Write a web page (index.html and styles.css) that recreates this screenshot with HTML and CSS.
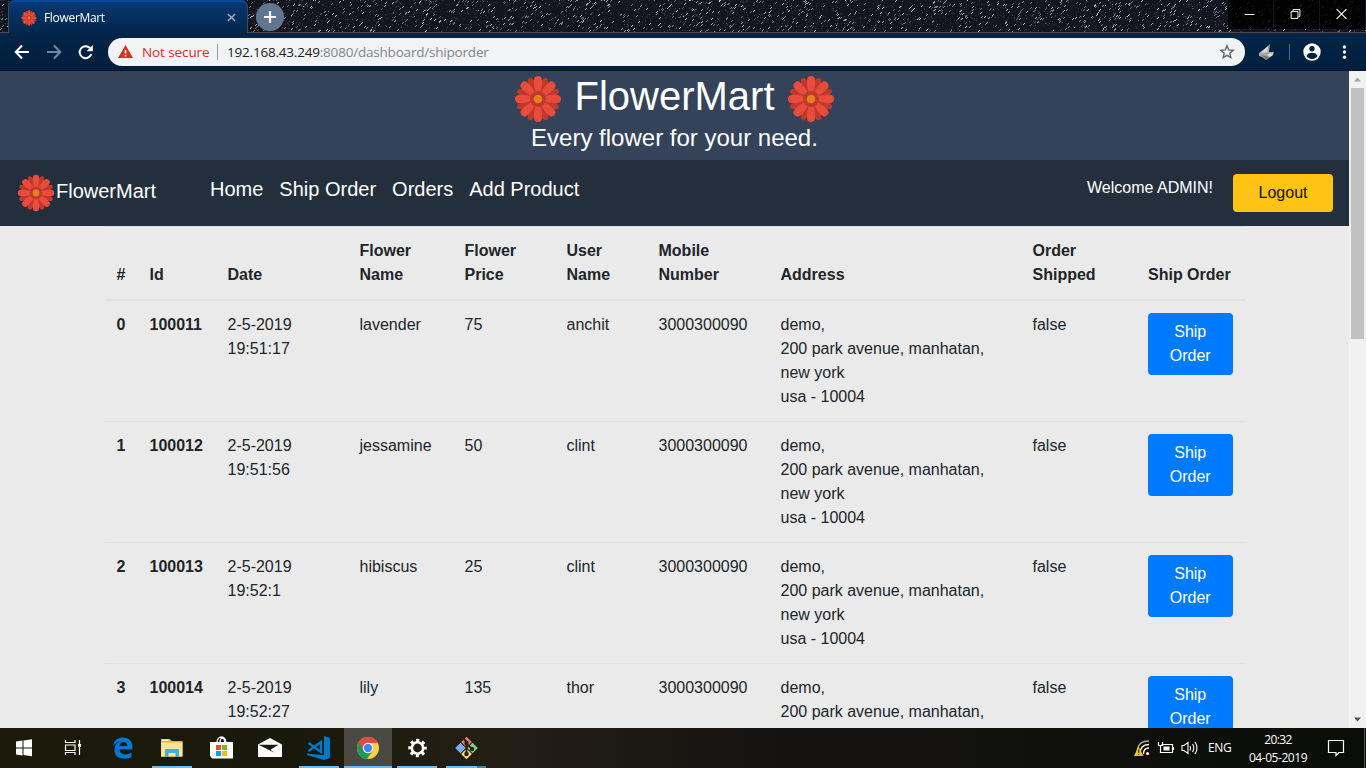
FILE: index.html
```html
<!DOCTYPE html>
<html lang="en">
<head>
<meta charset="utf-8">
<title>FlowerMart</title>
<link rel="stylesheet" href="styles.css">
</head>
<body>
<svg width="0" height="0" class="defs">
  <symbol id="flower" viewBox="0 0 48 48">
    <g fill="#c0392b">
      <g id="dark"><ellipse cx="24" cy="10.5" rx="4" ry="9.3" transform="rotate(22.5 24 24)"/><ellipse cx="24" cy="10.5" rx="4" ry="9.3" transform="rotate(67.5 24 24)"/><ellipse cx="24" cy="10.5" rx="4" ry="9.3" transform="rotate(112.5 24 24)"/><ellipse cx="24" cy="10.5" rx="4" ry="9.3" transform="rotate(157.5 24 24)"/></g>
      <use href="#dark" transform="rotate(180 24 24)"/>
      <circle cx="24" cy="24" r="13"/>
    </g>
    <g fill="#e74c3c">
      <g id="light"><path id="petal" d="M22 19C20.5 13 19.5 9 20 5a4 4 0 0 1 8 0C28.500 9 27.500 13 26 19z"/><use href="#petal" transform="rotate(45 24 24)"/><use href="#petal" transform="rotate(90 24 24)"/><use href="#petal" transform="rotate(135 24 24)"/></g>
      <use href="#light" transform="rotate(180 24 24)"/>
    </g>
    <circle cx="24" cy="24" r="8" fill="#c0392b"/><circle cx="24" cy="24" r="4.300" fill="#e67e22"/>
  </symbol>
</svg>
<div class="screen">
  <header class="titlebar">
    <canvas class="stars" id="stars" width="1366" height="33"></canvas>
    <div class="tab">
      <svg class="tab-icon"><use href="#flower"/></svg>
      <span class="tab-title">FlowerMart</span>
      <svg class="tab-close" viewBox="0 0 10 10"><path d="M1 1l8 8M9 1l-8 8" stroke="#a6b1c2" stroke-width="1.500"/></svg>
    </div>
    <div class="new-tab"><svg viewBox="0 0 28 28"><path d="M14 8v12M8 14h12" stroke="#fff" stroke-width="2.200"/></svg></div>
    <div class="window-controls">
      <svg viewBox="0 0 46 29"><path d="M17 14.500h10" stroke="#fff"/></svg>
      <svg viewBox="0 0 46 29"><path d="M17.500 11.500h7v7h-7zM19.500 11V9.500h7v7H25" fill="none" stroke="#fff"/></svg>
      <svg viewBox="0 0 46 29"><path d="M17 9l10 10M27 9L17 19" stroke="#fff" stroke-width="1.100"/></svg>
    </div>
  </header>
  <div class="toolbar">
    <svg class="nav-icons" viewBox="0 0 108 38" fill="none" stroke-width="2">
      <path d="M29 19H16M22 12.500L15.700 19l6.300 6.500" stroke="#fff"/>
      <path d="M47 19h13M54 12.500l6.300 6.500-6.300 6.500" stroke="#7487a0"/>
      <path d="M91.300 21.200a6 6 0 1 1-1.300-6.200" stroke="#fff"/><path d="M92.800 12v6.200h-6.200z" fill="#fff"/>
    </svg>
    <div class="omnibox">
      <svg class="warn" viewBox="0 0 15 13"><path d="M7.500 0L15 13H0z" fill="#d93025"/><path d="M7.500 5v3.500M7.500 9.800v1.600" stroke="#fff" stroke-width="1.600"/></svg>
      <span class="not-secure">Not secure</span>
      <i class="divider"></i>
      <span class="url"><b>192.168.43.249</b>:8080/dashboard/shiporder</span>
      <svg class="star" viewBox="0 0 16 16"><path d="M8 1.800l1.700 4.100 4.500.4-3.400 2.900 1 4.400L8 11.300l-3.800 2.300 1-4.400L1.800 6.300l4.500-.4z" fill="none" stroke="#5f6368" stroke-width="1.400"/></svg>
    </div>
    <svg class="tools" viewBox="0 0 121 38">
      <path d="M14 20l9-7 2-2-1 8 5 0-1 3-4 3-3 2-4-3-3-1z" fill="#a9a9a7"/><path d="M16 20l7-7-1 6zM23 21l5-1-1 3-4 1z" fill="#dededc"/><path d="M16 22l5 1 4 1-4 3z" fill="#77797a"/>
      <path d="M44.500 11v16" stroke="#526984"/>
      <circle cx="67" cy="19" r="8.700" fill="#fff"/><circle cx="67" cy="15.800" r="2.700" fill="#02203f"/><path d="M61.500 23c1-4.500 10-4.500 11 0-2 4-9 4-11 0z" fill="#02203f"/>
      <g fill="#fff"><circle cx="99.500" cy="14" r="1.700"/><circle cx="99.500" cy="19" r="1.700"/><circle cx="99.500" cy="24.200" r="1.700"/></g>
    </svg>
  </div>
  <div class="viewport">
    <main class="page">
      <section class="hero">
        <div class="hero-title"><svg><use href="#flower"/></svg><h1>FlowerMart</h1><svg><use href="#flower"/></svg></div>
        <h4>Every flower for your need.</h4>
      </section>
      <nav class="navbar">
        <div class="brand"><svg><use href="#flower"/></svg><span>FlowerMart</span></div>
        <div class="links"><a>Home</a><a>Ship Order</a><a>Orders</a><a>Add Product</a></div>
        <span class="welcome">Welcome ADMIN!</span>
        <button class="logout">Logout</button>
      </nav>
      <table class="orders">
        <colgroup><col class="c-num"><col class="c-id"><col class="c-date"><col class="c-flower"><col class="c-price"><col class="c-user"><col class="c-mobile"><col class="c-address"><col class="c-shipped"><col class="c-ship"></colgroup>
        <thead><tr><th>#</th><th>Id</th><th>Date</th><th>Flower<br>Name</th><th>Flower<br>Price</th><th>User<br>Name</th><th>Mobile<br>Number</th><th>Address</th><th>Order<br>Shipped</th><th>Ship Order</th></tr></thead>
        <tbody>
          <tr><th>0</th><th>100011</th><td>2-5-2019<br>19:51:17</td><td>lavender</td><td>75</td><td>anchit</td><td>3000300090</td><td>demo,<br>200 park avenue, manhatan,<br>new york<br>usa - 10004</td><td>false</td><td><button class="ship">Ship<br>Order</button></td></tr>
          <tr><th>1</th><th>100012</th><td>2-5-2019<br>19:51:56</td><td>jessamine</td><td>50</td><td>clint</td><td>3000300090</td><td>demo,<br>200 park avenue, manhatan,<br>new york<br>usa - 10004</td><td>false</td><td><button class="ship">Ship<br>Order</button></td></tr>
          <tr><th>2</th><th>100013</th><td>2-5-2019<br>19:52:1</td><td>hibiscus</td><td>25</td><td>clint</td><td>3000300090</td><td>demo,<br>200 park avenue, manhatan,<br>new york<br>usa - 10004</td><td>false</td><td><button class="ship">Ship<br>Order</button></td></tr>
          <tr><th>3</th><th>100014</th><td>2-5-2019<br>19:52:27</td><td>lily</td><td>135</td><td>thor</td><td>3000300090</td><td>demo,<br>200 park avenue, manhatan,</td><td>false</td><td><button class="ship">Ship<br>Order</button></td></tr>
        </tbody>
      </table>
    </main>
    <div class="scrollbar">
      <svg viewBox="0 0 17 17"><path d="M5 10.500h7L8.500 6.500z" fill="#a3a3a3"/></svg>
      <div class="thumb"></div>
      <svg class="down" viewBox="0 0 17 17"><path d="M5 6.500h7l-3.500 4z" fill="#505050"/></svg>
    </div>
  </div>
  <footer class="taskbar">
    <div class="app"><svg viewBox="0 0 48 40"><path d="M16 13.500l6.500-1v7H16zM23.500 12.400l8.500-1.200v8.300h-8.500zM16 20.500h6.500v7l-6.500-1zM23.500 20.500H32v7.700l-8.500-1.100z" fill="#fff"/></svg></div>
    <div class="app"><svg viewBox="0 0 48 40"><path d="M16.500 12v2.500h9.500V12M16.500 27v-2.500h9.500V27M16.500 17h9.500v5.500h-9.500zM30.500 12v15" fill="none" stroke="#fff" stroke-width="1.200"/><path d="M29 16h3v3h-3z" fill="#fff"/></svg></div>
    <div class="app gap-edge"><svg viewBox="0 0 48 40"><path d="M14 18.500C15 12 19 9.500 24 9.500c6.500 0 9.500 4.500 9.500 9.500v2.500H20.500c.3 6 7.500 6 12 3v4.500c-7 3.500-17 2-17-7 0-5 3-8 6-9-3 .5-5.500 2-7.500 5.500zM20.500 18h7.800c0-5.500-7.300-5-7.800 0z" fill="#0078d7"/></svg></div>
    <div class="app open"><svg viewBox="0 0 48 40"><path d="M13 11h9l1.500 2H34.500v16H13z" fill="#e8b334"/><path d="M14 11.500h7l-1 1.500h-6z" fill="#fff3cb"/><path d="M13 14.500h21.500v13.500H13z" fill="#ffe591"/><path d="M17 21h14v8h-3.500v-4h-7v4H17z" fill="#3bb0e5"/></svg></div>
    <div class="app"><svg viewBox="0 0 48 40"><path d="M20 15c0-8 9-8 9 0M23 15c0-6 4-7 5 0" fill="none" stroke="#fff" stroke-width="1.300"/><path d="M13 14h23v16.500H15L13 28z" fill="#fff"/><path d="M19 17h5v5h-5z" fill="#f25022"/><path d="M25 17h5v5h-5z" fill="#7fba00"/><path d="M19 23h5v5h-5z" fill="#00a4ef"/><path d="M25 23h5v5h-5z" fill="#ffb900"/></svg></div>
    <div class="app"><svg viewBox="0 0 48 40"><path d="M12 16.500L24 10l12 6.500V29H12z" fill="#fff"/><path d="M12.500 16.800h20l-8 5 4 3z" fill="#181a0b"/></svg></div>
    <div class="app open"><svg viewBox="0 0 48 40"><path d="M29 8l6 2v20l-6 2-17-5v-1.500l17 1.800z" fill="#0078c8"/><path d="M13.500 15l12.500 9V14l-12.500 9" fill="none" stroke="#0078c8" stroke-width="2.400"/></svg></div>
    <div class="app active open"><svg viewBox="0 0 48 40"><circle cx="24" cy="20" r="11" fill="#ffce44"/><path d="M24 20L14.500 14.500A11 11 0 0 0 23 31l5.500-8z" fill="#1a9d58"/><path d="M24 20v-5h10A11 11 0 0 0 14.500 14.500l4.800 8.200z" fill="#dc4c3f"/><circle cx="24" cy="20" r="5.200" fill="#fff"/><circle cx="24" cy="20" r="4.200" fill="#4285f4"/></svg></div>
    <div class="app open"><svg viewBox="0 0 48 40"><circle cx="24.500" cy="20" r="5.700" fill="none" stroke="#fff" stroke-width="2.600"/><circle cx="24.500" cy="20" r="7.700" fill="none" stroke="#fff" stroke-width="3" stroke-dasharray="3 3.047" stroke-dashoffset="1.500"/></svg></div>
    <div class="app open multi"><svg viewBox="0 0 48 40"><g transform="translate(24.500 20) rotate(45)"><path d="M-8-8h7.500v7.500H-8z" fill="#f37778"/><path d="M.5-8H8v7.500H.5z" fill="#83cf80"/><path d="M-8 .5h7.500V8H-8z" fill="#7cacef"/><path d="M.5.500H8V8H.5z" fill="#ffe173"/></g><path d="M21 10l3.500 4V28M24.500 16l6 5" fill="none" stroke="#2d2118" stroke-width="2"/><circle cx="24.500" cy="15" r="2.200" fill="#2d2118"/><circle cx="24.500" cy="26" r="2.300" fill="#2d2118"/><circle cx="30" cy="21" r="2.200" fill="#2d2118"/></svg></div>
    <svg class="tray" viewBox="0 0 70 40">
      <g fill="none" stroke="#fff" stroke-width="1.300"><path d="M3 25c0-8 4-12 12-12" stroke="#aaa"/><path d="M6 26c0-6 3-9.500 9-9.500"/><path d="M9.500 26c0-3.500 2-6 5.500-6"/></g><circle cx="13.500" cy="25.500" r="1.500" fill="#fff"/><path d="M4.500 18.500L9.500 28H0z" fill="#fcc419"/><path d="M4.700 21.500v3.500M4.700 26v1" stroke="#222" stroke-width="1.200"/>
      <path d="M27.500 16.500h11v8h-12v-4M24.500 14v3.500h4V14M26.500 17v3.500M39.500 19v3" fill="none" stroke="#fff" stroke-width="1.200"/><path d="M29.500 18.500h6v4h-6z" fill="#fff"/>
      <path d="M48 17.500h2l4-3v11l-4-3h-2zM56 18q1.300 2 0 4.500M58.500 16q2.600 4 0 8M61 14q4 6 0 12" fill="none" stroke="#fff" stroke-width="1.100"/>
    </svg>
    <span class="lang">ENG</span>
    <div class="clock"><span>20:32</span><span class="date">04-05-2019</span></div>
    <svg class="notify" viewBox="0 0 44 40"><path d="M6.500 12.500h15v12H17l-3 3v-3H6.500z" fill="none" stroke="#fff" stroke-width="1.200"/><path d="M42.500 0v40" stroke="#555"/></svg>
  </footer>
</div>
<script src="stars.js"></script>
</body>
</html>
```
FILE: styles.css
```css
* { box-sizing: border-box; }
body { margin: 0; overflow: hidden; font: 16px/24px "Liberation Sans", Arial, sans-serif; color: #212529; }
svg { display: block; flex: none; }
.defs { position: absolute; }
.screen { display: grid; grid-template-rows: 33px 38px 657px 40px; width: 1366px; height: 768px; overflow: hidden; }

.titlebar { position: relative; display: flex; background: #15151f; border-bottom: 1px solid #4a4a50; }
.stars { position: absolute; left: 0; top: 0; }
.tab { position: relative; display: flex; align-items: center; width: 240px; height: 33px; margin-left: 8px; padding: 0 11px 0 12px; border-radius: 7px 7px 0 0; border: 1px solid #3a4a61; border-top: 2px solid #0a4c9a; border-bottom: 0; background: linear-gradient(#073872, #03264c); color: #fff; }
.tab-icon { width: 16px; height: 16px; }
.tab-title { margin-left: 7px; font: 12px/16px "Open Sans", "Noto Sans", sans-serif; letter-spacing: -0.32px; flex: 1; }
.tab-close { width: 9px; height: 9px; }
.new-tab { position: relative; width: 28px; height: 28px; margin: 3px 0 0 8px; border-radius: 50%; background: #60778f; }
.window-controls { position: relative; display: flex; height: 29px; margin-left: auto; background: rgba(0, 0, 0, .88); }
.window-controls svg { width: 46px; height: 29px; border-right: 1px solid #16161a; }

.toolbar { display: flex; align-items: center; background: linear-gradient(#032548, #021e3d); border-bottom: 1px solid #061629; }
.nav-icons { width: 108px; height: 38px; }
.omnibox { display: flex; align-items: center; width: 1137px; height: 28px; padding: 0 10px; border-radius: 14px; background: #f1f3f4; font: 13.5px/20px "Open Sans", "Noto Sans", sans-serif; }
.warn { width: 15px; height: 13px; }
.not-secure { width: 67px; margin-left: 9px; color: #d93025; letter-spacing: -0.1px; white-space: nowrap; }
.divider { width: 1px; height: 16px; margin: 0 9px 0 8px; background: #9a9da1; }
.url { color: #80868b; letter-spacing: -0.2px; }
.url b { font-weight: 400; color: #202124; }
.star { width: 16px; height: 16px; margin-left: auto; }
.tools { width: 121px; height: 38px; }

.viewport { display: grid; grid-template-columns: 1349px 17px; overflow: hidden; }
.page { height: 657px; overflow: hidden; background: #eaeaea; }
.hero { height: 89px; background: #34435a; color: #fff; text-align: center; }
.hero-title { display: flex; justify-content: center; gap: 12px; height: 55px; padding-top: 4px; }
.hero-title svg { width: 48px; height: 48px; }
.hero h1 { margin: -3px 0 0; font-size: 40px; font-weight: 400; line-height: 48px; }
.hero h4 { margin: -2px 0 0; font-size: 24px; font-weight: 400; line-height: 28px; }
.navbar { display: flex; height: 66px; padding: 0 16px 0 17px; background: #242f3e; color: #fff; font-size: 20px; }
.brand { display: flex; width: 193px; padding-top: 14px; }
.brand svg { width: 38px; height: 38px; }
.brand span { margin-left: 1px; line-height: 34px; }
.links { display: flex; gap: 16px; padding-top: 14px; line-height: 30px; flex: 1; }
.welcome { padding-top: 16px; margin-right: 20px; font-size: 16px; }
.logout { width: 100px; height: 38px; margin-top: 14px; border: 0; border-radius: 4px; background: #ffc413; color: #111; font: 16px "Liberation Sans", Arial, sans-serif; }

.orders { width: 1140px; margin-left: 104.5px; table-layout: fixed; border-collapse: separate; border-spacing: 0; }
.orders th, .orders td { padding: 12px 0 12px 12px; text-align: left; vertical-align: top; border-top: 1px solid #dee2e6; white-space: nowrap; }
.orders thead th { vertical-align: bottom; border-bottom: 2px solid #dee2e6; }
.orders tbody tr:first-child > * { border-top: 0; }
.c-num { width: 33px; }
.c-id { width: 78px; }
.c-date { width: 132px; }
.c-flower { width: 105px; }
.c-price { width: 102px; }
.c-user { width: 92px; }
.c-mobile { width: 122px; }
.c-address { width: 252px; }
.c-shipped { width: 115.5px; }
.c-ship { width: 108.5px; }
.ship { display: block; width: 84.5px; height: 62px; padding: 0; border: 0; border-radius: 4px; background: #007bff; color: #fff; font: 16px/24px "Liberation Sans", Arial, sans-serif; }

.scrollbar { display: flex; flex-direction: column; align-items: center; background: #f1f1f1; }
.scrollbar svg { width: 17px; height: 17px; }
.thumb { width: 13px; height: 251px; background: #c1c1c1; }
.scrollbar .down { margin-top: auto; }

.taskbar { display: flex; background: linear-gradient(90deg, #1b1a0b 0, #19190b 22%, #241f15 36%, #161412 55%, #0a0d08 100%); color: #fff; font: 12px/16px "Open Sans", "Noto Sans", sans-serif; }
.app { position: relative; width: 48px; height: 40px; margin-right: 1px; }
.app svg { width: 48px; height: 40px; }
.gap-edge { margin-left: 1px; }
.open::after { content: ""; position: absolute; left: 4px; right: 4px; bottom: 0; height: 2px; background: #76b9ed; }
.active { background: #4b4a42; }
.active::after { left: 0; right: 0; }
.multi::after { background: linear-gradient(90deg, #76b9ed 31px, #4c7ea6 31px); }
.tray { width: 70px; height: 40px; margin-left: auto; }
.lang { width: 27px; margin-left: 4px; line-height: 40px; letter-spacing: -0.3px; }
.clock { width: 78px; margin-left: 4px; display: flex; flex-direction: column; align-items: center; padding-top: 3px; line-height: 18px; letter-spacing: -0.6px; }
.clock .date { letter-spacing: -0.45px; }
.notify { width: 44px; height: 40px; margin-left: 5px; }
```
FILE: stars.js
```js
// Scatter small slanted specks over the dark window frame.
const ctx = document.getElementById('stars').getContext('2d');
let seed = 7;
const rand = () => (seed = (seed * 16807) % 2147483647) / 2147483647;
for (let i = 0; i < 5200; i++) {
  const x = rand() * 1366, y = rand() * 32, light = rand();
  const v = 40 + Math.floor(Math.pow(light, 4) * 170);
  ctx.fillStyle = `rgb(${v},${v},${v + 12})`;
  ctx.fillRect(Math.floor(x), Math.floor(y), 1, 1);
  if (light > 0.75) ctx.fillRect(Math.floor(x) + 1, Math.floor(y) - 1, 1, 1);
}
```
